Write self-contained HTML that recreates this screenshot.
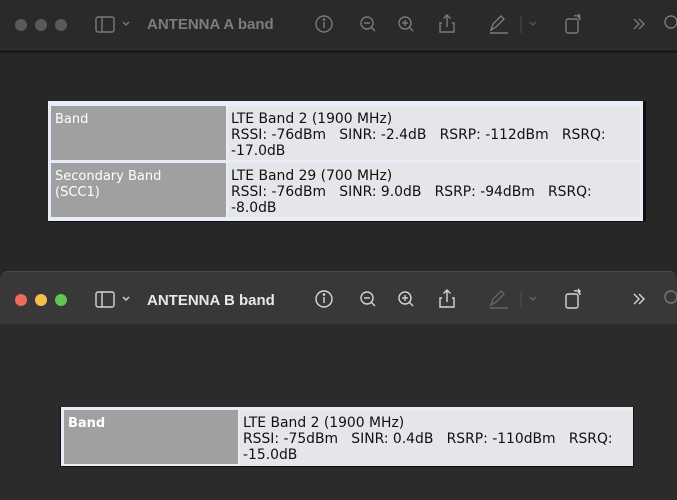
<!DOCTYPE html>
<html><head><meta charset="utf-8"><style>
*{margin:0;padding:0;box-sizing:border-box}
body{width:677px;height:500px;background:#272727;position:relative;overflow:hidden;font-family:"DejaVu Sans",Verdana,sans-serif}
.abs{position:absolute}
.tb{position:absolute;left:0;width:677px}
.dot{position:absolute;width:12px;height:12px;border-radius:50%}
.title{position:absolute;font-family:"Liberation Sans",Arial,sans-serif;font-weight:bold;font-size:15px}
svg{position:absolute;overflow:visible}
.tbl{position:absolute;background:#e8eef8}
.l{position:absolute;background:#a0a0a0;color:#fff;font-size:13px;line-height:16px;padding:6px 4px 0}
.r{position:absolute;background:#e5e5ea;color:#111;font-size:13.9px;line-height:16px;padding:5px 3px 0;white-space:pre}
</style></head><body>
<div class="tb" style="top:0;height:50px;background:#2a2a2a;border-bottom:1px solid #333"></div>
<div class="abs" style="top:50px;left:0;width:677px;height:3px;background:#1a1a1a"></div>
<div class="dot" style="left:15px;top:19px;background:#5a5a5a"></div>
<div class="dot" style="left:35px;top:19px;background:#5a5a5a"></div>
<div class="dot" style="left:55px;top:19px;background:#5a5a5a"></div>
<div class="title" style="left:147px;top:16px;color:#7d7d7d">ANTENNA A band</div>
<svg width="677" height="50" style="left:0;top:0" fill="none" stroke="#7a7a7a" stroke-width="1.4">
<rect x="96" y="17" width="18" height="15" rx="2"/><line x1="102" y1="17" x2="102" y2="32"/>
<path d="M123 22l3 3 3-3"/>
<circle cx="324" cy="24" r="8"/><line x1="324" y1="22" x2="324" y2="28"/><circle cx="324" cy="19.5" r=".6" fill="#7a7a7a"/>
<circle cx="367" cy="23" r="6"/><line x1="371" y1="27" x2="375" y2="31"/><line x1="364" y1="23" x2="370" y2="23"/>
<circle cx="405" cy="23" r="6"/><line x1="409" y1="27" x2="413" y2="31"/><line x1="402" y1="23" x2="408" y2="23"/><line x1="405" y1="20" x2="405" y2="26"/>
<path d="M442 23h-2v9h14v-9h-2M447 15v12M443.5 18.5l3.5-3.5 3.5 3.5"/>
<path d="M491 30l2-6 8-8 3 3-8 8-5 3z"/><line x1="490" y1="33" x2="508" y2="33"/>
<line x1="521" y1="16" x2="521" y2="33" stroke="#444"/>
<path d="M530 22l3 3 3-3" stroke="#555"/>
<rect x="566" y="19" width="12" height="14" rx="2"/><path d="M574 16c4-1 6 1 6 4M578 14l2 2-2 2"/>
<path d="M634 19l5 5-5 5M639 19l5 5-5 5"/>
<circle cx="671" cy="22" r="6"/>
</svg>
<div class="abs" style="left:48px;top:101px;width:598px;height:121px;background:#111"></div>
<div class="tbl" style="left:48px;top:101px;width:595px;height:120px"></div>
<div class="l" style="left:51px;top:106px;width:175px;height:54px">Band</div>
<div class="r" style="left:228px;top:106px;width:412px;height:54px">LTE Band 2 (1900 MHz)
RSSI: -76dBm   SINR: -2.4dB   RSRP: -112dBm   RSRQ:
-17.0dB</div>
<div class="l" style="left:51px;top:163px;width:175px;height:54px">Secondary Band<br>(SCC1)</div>
<div class="r" style="left:228px;top:163px;width:412px;height:54px">LTE Band 29 (700 MHz)
RSSI: -76dBm   SINR: 9.0dB   RSRP: -94dBm   RSRQ:
-8.0dB</div>
<div class="abs" style="top:271px;left:0;width:677px;height:229px;background:#2b2b2b;border-top:1px solid #4a4a4a;border-radius:8px 8px 0 0"></div>
<div class="tb" style="top:272px;height:52px;background:#383838;border-radius:8px 8px 0 0"></div>
<div class="dot" style="left:15px;top:294px;background:#ed6a5e"></div>
<div class="dot" style="left:35px;top:294px;background:#f5bf4f"></div>
<div class="dot" style="left:55px;top:294px;background:#61c554"></div>
<div class="title" style="left:147px;top:292px;color:#e8e8e8">ANTENNA B band</div>
<svg width="677" height="50" style="left:0;top:275px" fill="none" stroke="#d6d6d6" stroke-width="1.4">
<rect x="96" y="17" width="18" height="15" rx="2"/><line x1="102" y1="17" x2="102" y2="32"/>
<path d="M123 22l3 3 3-3"/>
<circle cx="324" cy="24" r="8"/><line x1="324" y1="22" x2="324" y2="28"/><circle cx="324" cy="19.5" r=".6" fill="#d6d6d6"/>
<circle cx="367" cy="23" r="6"/><line x1="371" y1="27" x2="375" y2="31"/><line x1="364" y1="23" x2="370" y2="23"/>
<circle cx="405" cy="23" r="6"/><line x1="409" y1="27" x2="413" y2="31"/><line x1="402" y1="23" x2="408" y2="23"/><line x1="405" y1="20" x2="405" y2="26"/>
<path d="M442 23h-2v9h14v-9h-2M447 15v12M443.5 18.5l3.5-3.5 3.5 3.5"/>
<g stroke="#666"><path d="M491 30l2-6 8-8 3 3-8 8-5 3z"/><line x1="490" y1="33" x2="508" y2="33"/>
<line x1="521" y1="16" x2="521" y2="33" stroke="#4a4a4a"/><path d="M530 22l3 3 3-3"/></g>
<rect x="566" y="19" width="12" height="14" rx="2"/><path d="M574 16c4-1 6 1 6 4M578 14l2 2-2 2"/>
<path d="M634 19l5 5-5 5M639 19l5 5-5 5"/>
<circle cx="671" cy="22" r="6" stroke="#777"/>
</svg>
<div class="abs" style="left:60px;top:407px;width:574px;height:60px;background:#111"></div>
<div class="tbl" style="left:61px;top:407px;width:572px;height:59px"></div>
<div class="l" style="left:64px;top:410px;width:174px;height:54px;font-weight:bold">Band</div>
<div class="r" style="left:240px;top:410px;width:393px;height:56px">LTE Band 2 (1900 MHz)
RSSI: -75dBm   SINR: 0.4dB   RSRP: -110dBm   RSRQ:
-15.0dB</div>
</body></html>
